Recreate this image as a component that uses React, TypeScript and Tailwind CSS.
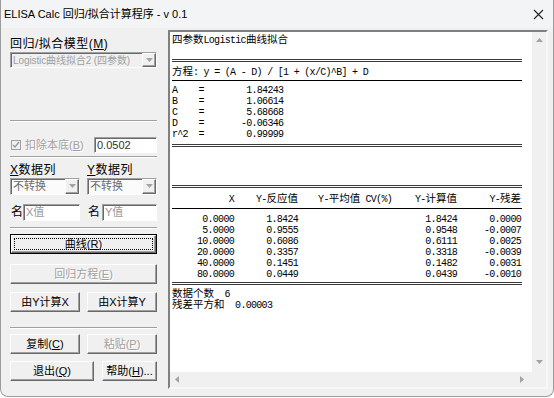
import type { ReactNode } from "react"

const ui = "font-['Liberation_Sans','Noto_Sans_CJK_SC',sans-serif]"
const mono = "font-['Liberation_Mono','Noto_Sans_CJK_SC',monospace]"

// raised 3D edge of classic Windows controls
const raised =
    "border border-t-white border-l-white border-r-[#696969] border-b-[#696969] shadow-[inset_-1px_-1px_0_#a0a0a0]"
// sunken edge for edits, combos and the output box
const sunken =
    "border border-t-[#a0a0a0] border-l-[#a0a0a0] border-r-white border-b-white shadow-[inset_1px_1px_0_#696969]"

const rows = [
    ["0.0000", "1.8424", "1.8424", "0.0000"],
    ["5.0000", "0.9555", "0.9548", "-0.0007"],
    ["10.0000", "0.6086", "0.6111", "0.0025"],
    ["20.0000", "0.3357", "0.3318", "-0.0039"],
    ["40.0000", "0.1451", "0.1482", "0.0031"],
    ["80.0000", "0.0449", "0.0439", "-0.0010"]
]

const params = [
    "A    =        1.84243",
    "B    =        1.06614",
    "C    =        5.68668",
    "D    =       -0.06346",
    "r^2  =        0.99999"
]

// CJK text inside the fixed-pitch output
function C({ children }: { children: ReactNode }) {
    return <span className="text-[10.5px] tracking-normal">{children}</span>
}

function Separator() {
    return <div className="h-[2px] border-t border-t-[#a0a0a0] border-b border-b-white" />
}

function DoubleLine() {
    return <div className="h-[3px] w-[350px] border-y border-[#3a3a3a]" />
}

function Arrow({ dir }: { dir: "up" | "down" | "left" | "right" }) {
    const pts = {
        up: "1,6 4.5,2 8,6",
        down: "1,2 4.5,6 8,2",
        left: "6,1 2,4.5 6,8",
        right: "2,1 6,4.5 2,8"
    }[dir]
    return (
        <svg width="9" height="9" viewBox="0 0 9 9">
            <polygon points={pts} fill="#a3a3a3" />
        </svg>
    )
}

function Button({
    children,
    disabled,
    className = ""
}: {
    children: ReactNode
    disabled?: boolean
    className?: string
}) {
    return (
        <div
            className={`h-[20px] flex items-center justify-center bg-[#f0f0f0] text-[11px] ${raised} ${
                disabled ? "text-[#a0a0a0] [text-shadow:1px_1px_0_#fff]" : "text-black"
            } ${className}`}
        >
            {children}
        </div>
    )
}

function Combo({
    text,
    disabled,
    className = "",
    textClass = "text-[11px]"
}: {
    text: string
    disabled?: boolean
    className?: string
    textClass?: string
}) {
    return (
        <div className={`flex items-center ${sunken} ${disabled ? "bg-[#f0f0f0]" : "bg-[#fbfbfb]"} ${className}`}>
            <span
                className={`flex-1 pl-[2px] whitespace-nowrap overflow-hidden ${textClass} ${
                    disabled ? "text-[#a0a0a0]" : "text-[#6d6d6d]"
                }`}
            >
                {text}
            </span>
            <div className={`w-[14px] h-full flex items-center justify-center bg-[#f0f0f0] ${raised}`}>
                <Arrow dir="down" />
            </div>
        </div>
    )
}

function Edit({ text, placeholder, className = "" }: { text: string; placeholder?: boolean; className?: string }) {
    return (
        <div
            className={`flex items-center bg-white pl-[2px] text-[11px] ${sunken} ${
                placeholder ? "text-[#9a9a9a]" : "text-[#333]"
            } ${className}`}
        >
            {text}
        </div>
    )
}

function LeftPanel() {
    return (
        <div className={`w-[147px] flex flex-col pt-[9px] ${ui}`}>
            <div className="h-[14px] text-[12px] leading-[14px] tracking-[0.5px]">
                回归/拟合模型(<u>M</u>)
            </div>
            <Combo
                text="Logistic曲线拟合2 (四参数)"
                disabled
                className="mt-[1px] h-[16px]"
                textClass="text-[10px] tracking-[-0.1px]"
            />

            <div className="mt-[52px]">
                <Separator />
            </div>

            <div className="mt-[15px] h-[16px] flex items-center">
                <div className="ml-[1px] w-[10px] h-[10px] border border-[#a0a0a0] bg-[#f0f0f0] flex items-center justify-center">
                    <svg width="8" height="8" viewBox="0 0 8 8">
                        <polyline points="1,4 3,6 7,1" fill="none" stroke="#9a9a9a" strokeWidth="1.4" />
                    </svg>
                </div>
                <span className="ml-[4px] text-[11px] text-[#a0a0a0] [text-shadow:1px_1px_0_#fff]">
                    扣除本底(<u>B</u>)
                </span>
                <Edit text="0.0502" className="ml-auto w-[63px] h-[16px]" />
            </div>

            <div className="mt-[3px]">
                <Separator />
            </div>

            <div className="mt-[6px] h-[12px] flex text-[12px] leading-[12px] tracking-[0.5px]">
                <span className="w-[77px]">
                    <u>X</u>数据列
                </span>
                <span>
                    <u>Y</u>数据列
                </span>
            </div>
            <div className="mt-[2px] flex gap-[7px]">
                <Combo text="不转换" className="w-[70px] h-[17px]" />
                <Combo text="不转换" className="w-[70px] h-[17px]" />
            </div>

            <div className="mt-[8px] flex gap-[7px] text-[12px]">
                <div className="w-[70px] flex items-center">
                    <span className="w-[13px] pl-[1px]">名</span>
                    <Edit text="X值" placeholder className="flex-1 h-[17px]" />
                </div>
                <div className="w-[70px] flex items-center">
                    <span className="w-[15px] pl-[1px]">名</span>
                    <Edit text="Y值" placeholder className="flex-1 h-[17px]" />
                </div>
            </div>

            <div className="mt-[6px]">
                <Separator />
            </div>

            {/* default button with focus rectangle */}
            <div className="mt-[5px] h-[20px] border border-black">
                <div className={`h-full flex bg-[#f0f0f0] p-[2px] ${raised}`}>
                    <div className="flex-1 flex items-center justify-center border border-dotted border-black text-[11px]">
                        曲线(<u>R</u>)
                    </div>
                </div>
            </div>
            <Button disabled className="mt-[10px]">
                回归方程(<u>E</u>)
            </Button>
            <div className="mt-[8px] flex gap-[7px]">
                <Button className="w-[70px]">由Y计算X</Button>
                <Button className="w-[70px]">由X计算Y</Button>
            </div>

            <div className="mt-[15px]">
                <Separator />
            </div>

            <div className="mt-[5px] flex gap-[7px]">
                <Button className="w-[70px]">
                    复制(<u>C</u>)
                </Button>
                <Button disabled className="w-[70px]">
                    粘贴(<u>P</u>)
                </Button>
            </div>
            <div className="mt-[7px] flex gap-[8px]">
                <Button className="w-[84px]">
                    退出(<u>Q</u>)
                </Button>
                <Button className="w-[55px]">
                    帮助(<u>H</u>)...
                </Button>
            </div>
        </div>
    )
}

function Output() {
    return (
        <div className={`flex flex-col pl-[2px] text-[10px] leading-[11px] tracking-[-0.7px] text-black whitespace-pre ${mono}`}>
            <div className="h-[3px]" />
            <div className="h-[11px] flex items-center">
                <C>四参数</C>Logistic<C>曲线拟合</C>
            </div>
            <div className="h-[13px]" />
            <DoubleLine />
            <div className="h-[4px]" />
            <div className="h-[12px] flex items-center">
                <C>方程</C>: y = (A - D) / [1 + (x/C)^B] + D
            </div>
            <div className="h-[2px]" />
            <div className="h-px w-[350px] bg-black" />
            <div className="h-[4px]" />
            {params.map((p) => (
                <div key={p} className="h-[11px] flex items-center">
                    {p}
                </div>
            ))}
            <div className="h-[4px]" />
            <DoubleLine />
            <div className="h-[38px]" />
            <DoubleLine />
            <div className="h-[5px]" />
            <div className="h-[12px] grid grid-cols-[62px_64px_94px_65px_64px] items-center text-right">
                <span>X</span>
                <span>
                    Y-<C>反应值</C>
                </span>
                <span>
                    Y-<C>平均值</C> CV(%)
                </span>
                <span>
                    Y-<C>计算值</C>
                </span>
                <span>
                    Y-<C>残差</C>
                </span>
            </div>
            <div className="h-[3px]" />
            <div className="h-px w-[350px] bg-black" />
            <div className="h-[5px]" />
            {rows.map((r) => (
                <div key={r[0]} className="h-[11px] grid grid-cols-[62px_64px_94px_65px_64px] items-center text-right">
                    <span>{r[0]}</span>
                    <span>{r[1]}</span>
                    <span />
                    <span>{r[2]}</span>
                    <span>{r[3]}</span>
                </div>
            ))}
            <div className="h-[2px]" />
            <DoubleLine />
            <div className="h-[4px]" />
            <div className="h-[11px] flex items-center">
                <C>数据个数</C>  6
            </div>
            <div className="h-[11px] flex items-center">
                <C>残差平方和</C>  0.00003
            </div>
        </div>
    )
}

function OutputBox() {
    return (
        <div className="mt-[2px] w-[380px] h-[359px] flex flex-col border-2 border-t-[#808080] border-l-[#808080] border-r-[#f8f8f8] border-b-[#f8f8f8] shadow-[inset_1px_1px_0_#505050]">
            <div className="flex-1 flex min-h-0">
                <div className="flex-1 bg-white overflow-hidden">
                    <Output />
                </div>
                <div className="w-[14px] bg-[#f0f0f0] flex flex-col items-center justify-between pt-[4px] pb-[5px]">
                    <Arrow dir="up" />
                    <Arrow dir="down" />
                </div>
            </div>
            <div className="h-[15px] flex">
                <div className="flex-1 bg-[#f0f0f0] flex items-center justify-between pl-[3px] pr-[5px]">
                    <Arrow dir="left" />
                    <Arrow dir="right" />
                </div>
                <div className="w-[14px] bg-[#f0f0f0]" />
            </div>
        </div>
    )
}

export default function App() {
    return (
        <div className="w-[554px] h-[398px] bg-white">
            <div className="w-[554px] h-[397px] flex flex-col bg-[#f0f0f0] border-x border-b border-[#9c9c9c] rounded-b-[8px] overflow-hidden">
                <div className={`h-[28px] flex items-center bg-[#f3f4f6] pl-[3px] ${ui}`}>
                    <span className="text-[11px] text-black">ELISA Calc 回归/拟合计算程序 - v 0.1</span>
                    <svg className="ml-auto mr-[9px]" width="11" height="11" viewBox="0 0 11 11">
                        <path d="M1 1 L10 10 M10 1 L1 10" stroke="#222" strokeWidth="1.1" />
                    </svg>
                </div>
                <div className="flex-1 flex pl-[9px]">
                    <LeftPanel />
                    <div className="w-[11px]" />
                    <OutputBox />
                </div>
            </div>
        </div>
    )
}
